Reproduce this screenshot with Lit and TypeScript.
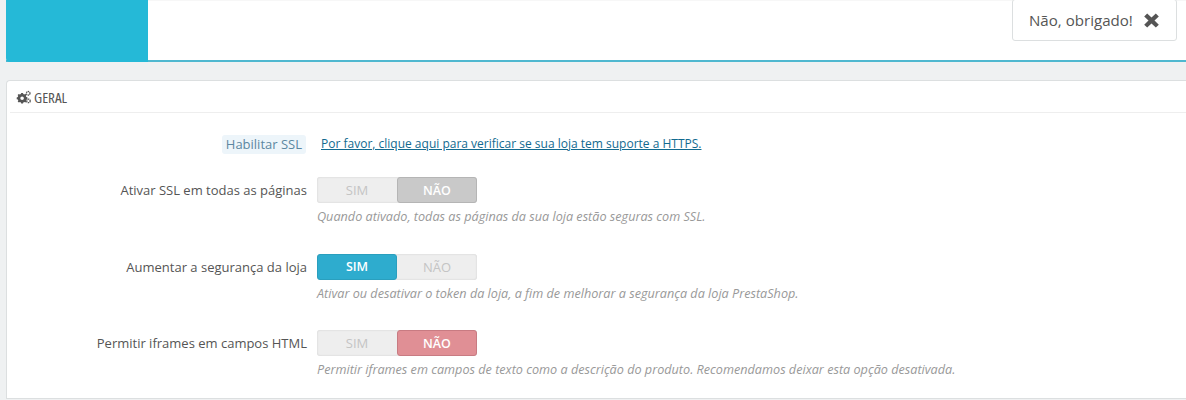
import { LitElement, html, css } from "lit";
import { customElement } from "lit/decorators.js";

const rows = [
  { label: "Ativar SSL em todas as páginas", on: false, tone: "grey", help: "Quando ativado, todas as páginas da sua loja estão seguras com SSL." },
  { label: "Aumentar a segurança da loja", on: true, tone: "blue", help: "Ativar ou desativar o token da loja, a fim de melhorar a segurança da loja PrestaShop." },
  { label: "Permitir iframes em campos HTML", on: false, tone: "red", help: "Permitir iframes em campos de texto como a descrição do produto. Recomendamos deixar esta opção desativada." },
];

@customElement("app-root")
export class AppRoot extends LitElement {
  static styles = css`
    :host { display: block; width: 1186px; height: 400px; overflow: hidden; background: #eff1f2; font-family: "Open Sans", sans-serif; font-size: 13px; color: #555; position: relative; }
    .top { margin-left: 6px; background: #fff; border-bottom: 2px solid #4fb8d0; display: flex; border-top: 1px solid #f7f7f7; height: 59px; }
    .brand { width: 142px; height: 62px; margin-top: -1px; background: #25b9d7; border-radius: 0 0 0 4px; flex: none; }
    .no { position: absolute; left: 1012px; top: -1px; width: 165px; height: 42px; box-sizing: border-box; background: #fff; border: 1px solid #dcdfe0; border-radius: 3px; display: flex; align-items: center; padding-left: 16px; gap: 11px; font-size: 15.1px; color: #555; }
    .no svg { width: 15px; height: 15px; }
    .panel { margin: 18px 0 0 6px; background: #fff; border: 1px solid #dcdfe0; border-right: 0; border-radius: 4px 0 0 0; padding: 0 0 0 3px; height: 319px; box-sizing: border-box; }
    .head { height: 31px; border-bottom: 1px solid #eee; display: flex; align-items: center; gap: 3px; padding-left: 6px; font-family: "Open Sans", sans-serif; font-stretch: 75%; font-size: 15px; color: #555; text-transform: uppercase; }
    .head svg { width: 15px; height: 14px; }
    .form { display: grid; grid-template-columns: 297px 1fr; column-gap: 10px; align-items: center; padding-top: 22px; }
    .ssl { justify-self: end; background: #edf5fa; color: #5c87a1; border-radius: 3px; padding: 0 4px; line-height: 19px; margin-right: 1px; }
    .link { color: #126a8f; font-size: 12px; text-decoration: underline; padding: 0 0 2px 4px; }
    .label { text-align: right; color: #555; }
    .sw { display: grid; grid-template-columns: 80px 80px; width: 160px; height: 26px; box-sizing: border-box; background: #eee; border-radius: 3px; box-shadow: inset 0 0 2px rgba(0,0,0,.16); }
    .sw span { display: flex; align-items: center; justify-content: center; color: #c4c4c4; border-radius: 3px; box-sizing: border-box; }
    .sw .grey, .sw .blue, .sw .red { font-size: 12.5px; font-weight: 600; color: #fff; }
    .sw .grey { background: #c9c9c9; border: 1px solid #b5b5b5; }
    .sw .blue { background: #2eacce; border: 1px solid #2a9fbe; }
    .sw .red { background: #e08f95; border: 1px solid #c87b82; }
    .help { grid-column: 2; font-style: italic; font-size: 12.65px; color: #999; margin-top: 5px; line-height: 17px; }
    .gap { grid-column: 1 / -1; height: 28.5px; }
    .gap.first { height: 23px; }
  `;

  render() {
    return html`
      <div class="top"><div class="brand"></div></div>
      <div class="no">Não, obrigado!
        <svg viewBox="0 0 16 16"><path fill="#555" d="M3.4 .6 8 4.8 12.6 .6 15.8 3.6 11.2 8 15.8 12.4 12.6 15.4 8 11.2 3.4 15.4 .2 12.4 4.8 8 .2 3.6Z"/></svg>
      </div>
      <div class="panel">
        <div class="head">
          <svg viewBox="0 0 15 13"><path fill="#555" d="M5.2 2.4h1.8l.3 1.1 1 .4 1-.6 1.2 1.2-.6 1 .4 1 1.1.3v1.8l-1.1.3-.4 1 .6 1-1.2 1.2-1-.6-1 .4-.3 1.1H5.2l-.3-1.1-1-.4-1 .6-1.2-1.2.6-1-.4-1L.7 8.7V6.9l1.1-.3.4-1-.6-1 1.2-1.2 1 .6 1-.4ZM6.1 6a1.8 1.8 0 1 0 0 3.6 1.8 1.8 0 0 0 0-3.6Z"/><circle cx="12.2" cy="2.8" r="1.8" fill="none" stroke="#555" stroke-width="1.3" stroke-dasharray="1.3 .5"/><circle cx="12.4" cy="10.4" r="1.8" fill="none" stroke="#555" stroke-width="1.3" stroke-dasharray="1.3 .5"/></svg>
          Geral
        </div>
        <div class="form">
          <div class="ssl">Habilitar SSL</div>
          <a class="link">Por favor, clique aqui para verificar se sua loja tem suporte a HTTPS.</a>
          <div class="gap first"></div>
          ${rows.map((r) => html`
            <div class="label">${r.label}</div>
            <div class="sw">
              <span class=${r.on ? r.tone : ""}>SIM</span>
              <span class=${r.on ? "" : r.tone}>NÃO</span>
            </div>
            <div class="help">${r.help}</div>
            <div class="gap"></div>
          `)}
        </div>
      </div>
    `;
  }
}
